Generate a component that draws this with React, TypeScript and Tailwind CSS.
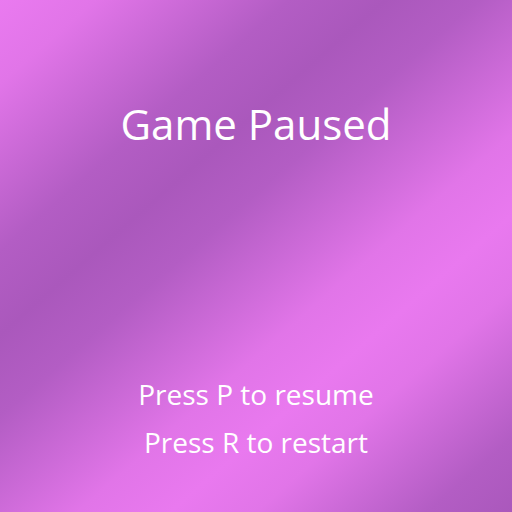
export default function App() {
  return (
    <div className="w-[512px] h-[512px] flex flex-col items-center text-white font-['Open_Sans',sans-serif] bg-[linear-gradient(139deg,#ea7af0_0%,#e175e8_8.75%,#ca69d6_17.5%,#b35dc4_26.25%,#aa58bc_35%,#b35dc4_43.5%,#ca69d6_52%,#e175e8_60.5%,#e979ef_69%,#e175e8_76.75%,#ca69d6_84.5%,#b35dc4_92.25%,#aa58bc_100%)]">
      <h1 className="pt-[103px] text-[42px] leading-[42px] font-normal">Game Paused</h1>
      <div className="mt-auto pb-[46px] flex flex-col items-center text-[28px] leading-[48px]">
        <p>Press P to resume</p>
        <p>Press R to restart</p>
      </div>
    </div>
  );
}
